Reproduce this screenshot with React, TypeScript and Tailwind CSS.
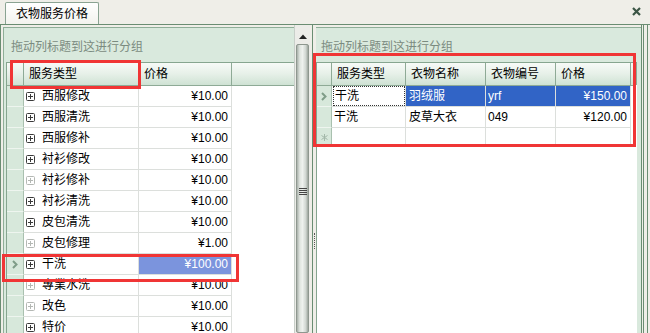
import React from "react";

const FONT = { fontFamily: '"Liberation Sans", "Noto Sans CJK SC", sans-serif' };

type LRow = { name: string; price: string; grey?: boolean; sel?: boolean };

const leftRows: LRow[] = [
  { name: "西服修改", price: "¥10.00" },
  { name: "西服清洗", price: "¥10.00" },
  { name: "西服修补", price: "¥10.00" },
  { name: "衬衫修改", price: "¥10.00" },
  { name: "衬衫修补", price: "¥10.00", grey: true },
  { name: "衬衫清洗", price: "¥10.00" },
  { name: "皮包清洗", price: "¥10.00" },
  { name: "皮包修理", price: "¥1.00", grey: true },
  { name: "干洗", price: "¥100.00", sel: true },
  { name: "專業水洗", price: "¥10.00", grey: true },
  { name: "改色", price: "¥10.00", grey: true },
  { name: "特价", price: "¥10.00" },
];

function PlusBox({ grey }: { grey?: boolean }) {
  const c = grey ? "#b4b8b4" : "#3a3a3a";
  return (
    <svg width="9" height="9" viewBox="0 0 9 9" className="shrink-0">
      <rect x="0.5" y="0.5" width="8" height="8" rx="1" fill="#fff" stroke={c} />
      <path d="M2 4.5H7M4.5 2V7" stroke={c} strokeWidth="1" />
    </svg>
  );
}

function Chevron() {
  return (
    <svg width="6" height="9" viewBox="0 0 6 9">
      <path d="M1 1L4.5 4.5L1 8" stroke="#7f9d88" strokeWidth="2" fill="none" />
    </svg>
  );
}

function Star() {
  return (
    <svg width="9" height="9" viewBox="0 0 9 9">
      <path d="M4.5 1V8M1.5 2.5L7.5 6.5M7.5 2.5L1.5 6.5" stroke="#a3b8a9" strokeWidth="1" />
    </svg>
  );
}

const headCell =
  "h-[22px] flex items-center pl-[5px] border-r border-[#8eaa96] bg-[linear-gradient(to_bottom,#f7faf7,#e6f0e8_50%,#cfe2d4)] text-[12px] text-black shrink-0";

function GroupText() {
  return (
    <div className="h-[34px] pt-[12px] pl-[5px] text-[12px] leading-[14px] text-[#7b8b80] shrink-0">
      拖动列标题到这进行分组
    </div>
  );
}

function LeftGrid() {
  return (
    <div className="flex-1 flex flex-col border-t border-[#86a58f] border-l border-[#86a58f] bg-white min-h-0">
      <div className="flex border-b border-[#8eaa96]">
        <div className={`${headCell} w-[17px] pl-0`} />
        <div className={`${headCell} w-[115px]`}>服务类型</div>
        <div className={`${headCell} w-[93px]`}>价格</div>
        <div className={`${headCell} flex-1 border-r-0`} />
      </div>
      {leftRows.map((r) => (
        <div key={r.name} className="flex h-[21px] shrink-0">
          <div className="w-[17px] shrink-0 bg-[#d7e8db] border-r border-[#a9c0af] border-b border-b-[#eef5ef] flex items-center justify-center">
            {r.sel ? <Chevron /> : null}
          </div>
          <div className="w-[115px] shrink-0 border-r border-b border-[#dcdfdc] flex items-center pl-[2px] gap-[7px] text-[12px] text-black">
            <PlusBox grey={r.grey} />
            <span>{r.name}</span>
          </div>
          <div
            className={`w-[93px] shrink-0 border-r border-b border-[#dcdfdc] flex items-center justify-end pr-[3px] text-[12px] ${
              r.sel ? "bg-[#7b94dd] text-white" : "text-black"
            }`}
          >
            {r.price}
          </div>
          <div className="flex-1" />
        </div>
      ))}
    </div>
  );
}

type RRow = { a: string; b: string; c: string; d: string; sel?: boolean };
const rightRows: RRow[] = [
  { a: "干洗", b: "羽绒服", c: "yrf", d: "¥150.00", sel: true },
  { a: "干洗", b: "皮草大衣", c: "049", d: "¥120.00" },
];

function RightGrid() {
  const cell = "shrink-0 border-r border-b border-[#dcdfdc] flex items-center text-[12px]";
  return (
    <div className="flex-1 flex flex-col border-t border-[#86a58f] border-l border-[#86a58f] bg-white min-h-0">
      <div className="flex border-b border-[#8eaa96] w-[318px]">
        <div className={`${headCell} w-[15px] pl-0`} />
        <div className={`${headCell} w-[74px]`}>服务类型</div>
        <div className={`${headCell} w-[80px]`}>衣物名称</div>
        <div className={`${headCell} w-[70px]`}>衣物编号</div>
        <div className={`${headCell} w-[75px]`}>价格</div>
        <div className={`${headCell} flex-1`} />
      </div>
      {rightRows.map((r, i) => (
        <div key={i} className="flex h-[21px] shrink-0">
          <div className="w-[15px] shrink-0 bg-[#d7e8db] border-r border-[#a9c0af] border-b border-b-[#eef5ef] flex items-center justify-center">
            {r.sel ? <Chevron /> : null}
          </div>
          <div className={`${cell} w-[74px] pl-[1px] text-black`}>
            <div className={`h-full w-full flex items-center pl-[1px] ${r.sel ? "border border-dotted border-[#333]" : ""}`}>
              {r.a}
            </div>
          </div>
          <div className={`${cell} w-[80px] pl-[3px] ${r.sel ? "bg-[#3164c6] text-white" : "text-black"}`}>{r.b}</div>
          <div className={`${cell} w-[70px] pl-[2px] ${r.sel ? "bg-[#3164c6] text-white" : "text-black"}`}>{r.c}</div>
          <div className={`${cell} w-[75px] justify-end pr-[3px] ${r.sel ? "bg-[#3164c6] text-white" : "text-black"}`}>{r.d}</div>
        </div>
      ))}
      <div className="flex h-[19px] shrink-0">
        <div className="w-[15px] shrink-0 bg-[#d7e8db] border-r border-b border-[#a9c0af] flex items-center justify-center">
          <Star />
        </div>
        <div className={`${cell} w-[74px]`} />
        <div className={`${cell} w-[80px]`} />
        <div className={`${cell} w-[70px]`} />
        <div className={`${cell} w-[75px]`} />
      </div>
    </div>
  );
}

export default function App() {
  return (
    <div className="relative w-[650px] h-[333px] overflow-hidden bg-[#efeee8] flex flex-col" style={FONT}>
      {/* tab strip */}
      <div className="h-[25px] shrink-0 flex items-end pl-[5px] pr-[9px] border-b border-[#6a8d72]">
        <div className="h-[22px] px-[10px] flex items-center border border-b-0 border-[#8aa392] bg-[linear-gradient(to_bottom,#ffffff,#f3f3ee)] rounded-t-[2px] text-[12px] text-black">
          衣物服务价格
        </div>
        <div className="flex-1" />
        <div className="self-center pb-[1px]">
          <svg width="9" height="9" viewBox="0 0 9 9">
            <path d="M1 1L8 8M8 1L1 8" stroke="#3b5545" strokeWidth="2.2" />
          </svg>
        </div>
      </div>

      {/* body */}
      <div className="flex-1 flex min-h-0">
        {/* left panel */}
        <div className="w-[294px] shrink-0 flex border-l border-[#6a8d72] pl-[2px] pt-[2px]">
          <div className="flex-1 flex flex-col border-l border-t border-[#8fae98] bg-[#d9e9dd] pl-[2px]">
            <GroupText />
            <LeftGrid />
          </div>
        </div>

        {/* scrollbar */}
        <div className="w-[16px] shrink-0 flex flex-col pt-[3px] bg-[#ecece8] border-l border-[#c8cfc9]">
          <div className="h-[16px] shrink-0 flex items-center justify-center">
            <svg width="8" height="5" viewBox="0 0 8 5">
              <path d="M0 5L4 0.5L8 5Z" fill="#222" />
            </svg>
          </div>
          <div className="flex-1 mx-[1px] rounded-[2px] border border-[#8e978f] bg-[linear-gradient(to_right,#a8b0a9,#dfe4df_25%,#eef1ee_50%,#d0d6d1_80%,#9ca49d)] flex flex-col items-center pt-[143px]">
            <div className="w-[8px] h-[1px] bg-[#444] mb-[1px]" />
            <div className="w-[8px] h-[1px] bg-[#444] mb-[1px]" />
            <div className="w-[8px] h-[1px] bg-[#444] mb-[1px]" />
            <div className="w-[8px] h-[1px] bg-[#444]" />
          </div>
        </div>

        {/* splitter */}
        <div className="w-[2px] shrink-0 bg-[#efeee8]" />

        {/* right panel */}
        <div className="flex-1 flex border-l border-[#6a8d72] pt-[2px] pr-[2px]">
          <div className="w-[3px] shrink-0 flex flex-col pt-[206px] items-center">
            <div className="w-[1px] h-[16px] border-l border-dotted border-[#555]" />
          </div>
          <div className="flex-1 flex flex-col border-t border-[#8fae98] bg-[#d9e9dd] pr-[4px]">
            <GroupText />
            <RightGrid />
          </div>
          <div className="w-[3px] shrink-0 border-l border-r border-[#6a8d72] mt-[-2px]" />
          <div className="w-[4px] shrink-0 border-r border-[#6a8d72] mt-[-2px]" />
        </div>
      </div>

      {/* red annotation boxes */}
      <div className="absolute left-[10px] top-[60px] w-[131px] h-[29px] border-[3px] border-[#f03535]" />
      <div className="absolute left-[2px] top-[254px] w-[237px] h-[28px] border-[3px] border-[#f03535]" />
      <div className="absolute left-[313px] top-[53px] w-[323px] h-[94px] border-[3px] border-[#f03535]" />
    </div>
  );
}
